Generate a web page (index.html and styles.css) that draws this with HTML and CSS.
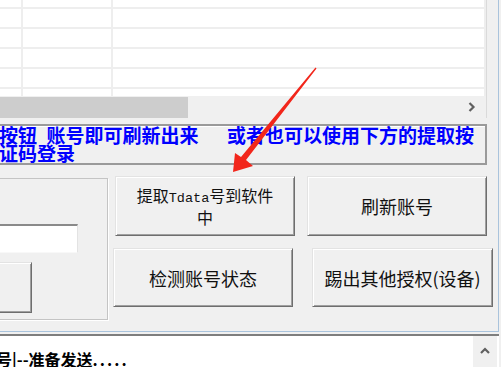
FILE: index.html
```html
<!DOCTYPE html>
<html lang="zh-CN">
<head>
    <meta charset="UTF-8">
    <meta name="viewport" content="width=device-width, initial-scale=1.0">
    <title>账号管理</title>
    <link rel="stylesheet" href="styles.css">
</head>
<body>
    <div class="panel">
        <div class="grid-box">
            <div class="grid">
                <table>
                    <colgroup><col class="c1"><col class="c2"><col></colgroup>
                    <tr><td></td><td></td><td></td></tr>
                    <tr><td></td><td></td><td></td></tr>
                    <tr><td></td><td></td><td></td></tr>
                    <tr><td></td><td></td><td></td></tr>
                    <tr><td></td><td></td><td></td></tr>
                    <tr><td></td><td></td><td></td></tr>
                </table>
            </div>
            <div class="hscroll">
                <div class="thumb"></div>
                <svg class="arrow-right" width="8" height="10" viewBox="0 0 8 10">
                    <path d="M1.5 1 L5.5 5 L1.5 9" fill="none" stroke="#606060" stroke-width="2.2"/>
                </svg>
            </div>
        </div>

        <div class="notice">
            <span class="notice-text">按钮&ensp;账号即可刷新出来&ensp;&ensp;&ensp;或者也可以使用下方的提取按<br>证码登录</span>
        </div>

        <div class="controls">
            <div class="group">
                <div class="field"></div>
                <div class="mini-btn"></div>
            </div>
            <div class="actions">
                <div class="row row-top">
                    <button class="btn btn-small">提取<span class="mono">Tdata</span>号到软件<br>中</button>
                    <button class="btn">刷新账号</button>
                </div>
                <div class="row row-bottom">
                    <button class="btn">检测账号状态</button>
                    <button class="btn btn-wide">踢出其他授权(设备)</button>
                </div>
            </div>
        </div>
    </div>

    <div class="log">
        <div class="log-text">号|--准备发送<span class="dots">.....</span></div>
        <div class="vscroll">
            <svg width="10" height="8" viewBox="0 0 10 8">
                <path d="M1 6 L5 2 L9 6" fill="none" stroke="#606060" stroke-width="2.2"/>
            </svg>
        </div>
    </div>

    <svg class="pointer" width="501" height="367" viewBox="0 0 501 367">
        <polygon points="233,172 235,153 241,157 315.5,67.5 316.5,68.5 246,160 253,166" fill="#f2261b"/>
    </svg>
</body>
</html>
```

FILE: styles.css
```css
body {
    margin: 0;
    width: 501px;
    height: 367px;
    overflow: hidden;
    position: relative;
    background: #f0f0f0;
    font-family: "Noto Sans CJK SC", sans-serif;
}
.panel {
    width: 499px;
    height: 332px;
    box-sizing: border-box;
    border-right: 1px solid #a9c3dc;
    border-bottom: 1px solid #a9c3dc;
}
.grid-box {
    width: 487px;
    height: 118px;
    background: #fff;
    border-right: 1px solid #dadada;
    box-sizing: border-box;
}
.grid {
    height: 96px;
    overflow: hidden;
}
table {
    width: 486px;
    margin-top: -13px;
    border-collapse: collapse;
    table-layout: fixed;
}
.c1 {
    width: 22px;
}
.c2 {
    width: 90px;
}
td {
    height: 18px;
    padding: 0;
    border: 2px solid #eeeeee;
}
td:first-child {
    border-left: none;
}
.hscroll {
    height: 22px;
    display: flex;
    align-items: center;
    background: #f0f0f0;
}
.thumb {
    width: 188px;
    height: 21px;
    background: #cdcdcd;
}
.arrow-right {
    margin-left: auto;
    margin-right: 10px;
}
.notice {
    width: 487px;
    height: 41px;
    margin-top: 6px;
    box-sizing: border-box;
    border: 2px solid #9a9a9a;
    border-left: none;
    box-shadow: inset 0 1px 0 #fff;
    overflow: hidden;
    white-space: nowrap;
    color: #0000ff;
    font-size: 19px;
    font-weight: bold;
    line-height: 18px;
}
.notice-text {
    display: block;
    margin-left: -1px;
}
.controls {
    display: flex;
    margin-top: 11px;
}
.group {
    width: 128px;
    height: 142px;
    margin-top: 2px;
    margin-left: -20px;
    box-sizing: border-box;
    border: 1px solid #c4c4c4;
    box-shadow: 1px 1px 0 #fff;
}
.field {
    width: 97px;
    height: 29px;
    margin-top: 45px;
    box-sizing: border-box;
    background: #fff;
    border-top: 2px solid #8a8a8a;
    border-right: 1px solid #e3e3e3;
    border-bottom: 1px solid #f8f8f8;
}
.mini-btn {
    width: 51px;
    height: 51px;
    margin-top: 9px;
    box-sizing: border-box;
    border: 1px solid;
    border-color: #e3e3e3 #6e6e6e #6e6e6e #e3e3e3;
    box-shadow: inset 1px 1px 0 #fff, inset -1px -1px 0 #a0a0a0;
}
.actions {
    margin-left: 5px;
}
.row {
    display: flex;
}
.row-top {
    padding-left: 2px;
    gap: 12px;
}
.row-bottom {
    margin-top: 12px;
    gap: 19px;
}
.btn {
    width: 180px;
    height: 60px;
    padding: 0;
    box-sizing: border-box;
    background: #f0f0f0;
    border: 1px solid;
    border-color: #e3e3e3 #6e6e6e #6e6e6e #e3e3e3;
    box-shadow: inset 1px 1px 0 #fff, inset -1px -1px 0 #a0a0a0;
    color: #111;
    font-family: "Noto Sans CJK SC", sans-serif;
    font-size: 18px;
    line-height: 20px;
}
.btn-small {
    font-size: 16px;
    line-height: 19px;
}
.mono {
    font-family: "Liberation Mono", monospace;
    font-size: 13.5px;
}
.row-bottom .btn {
    height: 59px;
}
.btn-wide {
    width: 181px;
}
.log {
    display: flex;
    width: 499px;
    height: 33px;
    margin-top: 2px;
    box-sizing: border-box;
    border-top: 2px solid #7e7e7e;
    background: #fff;
}
.log-text {
    flex: 1;
    padding-top: 13px;
    margin-left: -4px;
    font-size: 16px;
    font-weight: bold;
    line-height: 20px;
    color: #000;
    white-space: nowrap;
}
.dots {
    letter-spacing: 2px;
}
.vscroll {
    width: 24px;
    margin-right: 2px;
    display: flex;
    justify-content: center;
    padding-top: 11px;
    background: #f0f0f0;
}
.vscroll svg {
    display: block;
}
.pointer {
    position: absolute;
    left: 0;
    top: 0;
    pointer-events: none;
}
```
